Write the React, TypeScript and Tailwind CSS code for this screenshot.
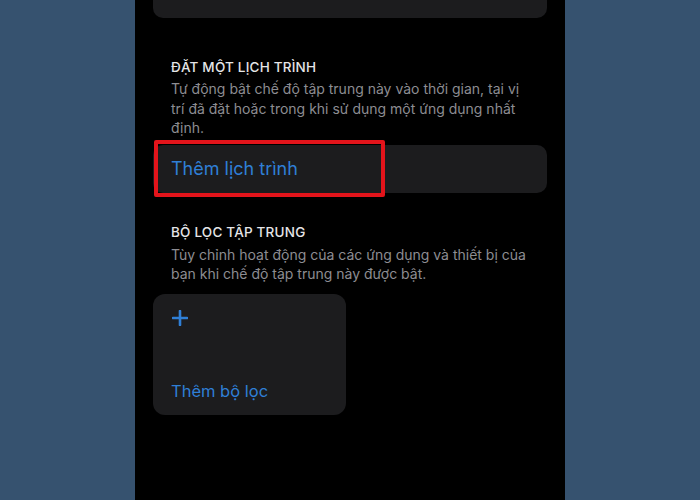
import { FC } from "react";

const App: FC = () => {
  return (
    <div className="flex justify-center w-[700px] h-[500px] bg-[#36526f] overflow-hidden">
      <div
        className="w-[430px] h-full bg-black flex flex-col px-[18px]"
        style={{ fontFamily: "Inter, 'Noto Sans', sans-serif" }}
      >
        <div className="h-[18px] bg-[#1c1c1e] rounded-b-[10px]" />

        <div className="mt-[39px] px-[18px]">
          <h2 className="text-[13.5px] leading-[20px] font-medium tracking-[0.2px] text-[#e5e5e7] uppercase">
            Đặt một lịch trình
          </h2>
          <p className="text-[14px] leading-[19.5px] text-[#8d8d92] mt-[2px]">
            Tự động bật chế độ tập trung này vào thời gian, tại vị trí đã đặt
            hoặc trong khi sử dụng một ứng dụng nhất định.
          </p>
        </div>

        <div className="relative mt-[7px] h-[48px] bg-[#1c1c1e] rounded-[10px] flex items-center px-[18px]">
          <span className="text-[18px] text-[#2f7fd6]">Thêm lịch trình</span>
          <div className="absolute left-[1px] top-[-5px] w-[231px] h-[57px] border-[4px] border-[#e3141b] rounded-[2px]" />
        </div>

        <div className="mt-[29px] px-[18px]">
          <h2 className="text-[13.5px] leading-[20px] font-medium tracking-[0.2px] text-[#e5e5e7] uppercase">
            Bộ lọc tập trung
          </h2>
          <p className="text-[14px] leading-[19.5px] text-[#8d8d92] mt-[3px]">
            Tùy chỉnh hoạt động của các ứng dụng và thiết bị của bạn khi chế
            độ tập trung này được bật.
          </p>
        </div>

        <div className="mt-[10px] w-[193px] h-[121px] bg-[#1c1c1e] rounded-[12px] flex flex-col justify-between px-[18px] pt-[16px] pb-[11px]">
          <svg width="16" height="16" viewBox="0 0 16 16" className="ml-[1px]">
            <path
              d="M8 1v14M1 8h14"
              stroke="#2f7fd6"
              strokeWidth="2.6"
              strokeLinecap="round"
            />
          </svg>
          <span className="text-[16.5px] text-[#2f7fd6]">Thêm bộ lọc</span>
        </div>
      </div>
    </div>
  );
};

export default App;
